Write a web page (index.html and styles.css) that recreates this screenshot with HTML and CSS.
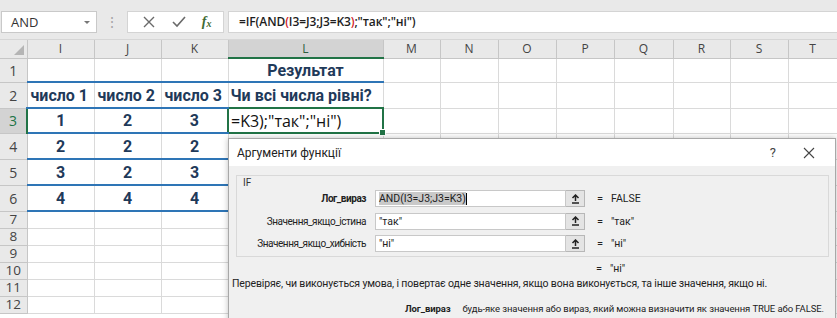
FILE: index.html
```html
<!DOCTYPE html>
<html lang="uk">
<head>
    <meta charset="UTF-8">
    <title>IF — Аргументи функції</title>
    <link rel="stylesheet" href="styles.css">
</head>
<body>
    <div class="toolbar">
        <div class="name-box">
            <span>AND</span>
            <span class="caret"></span>
        </div>
        <div class="grip">⋮</div>
        <div class="fx-buttons">
            <svg width="14" height="14" viewBox="0 0 14 14"><path d="M2 2 L12 12 M12 2 L2 12" stroke="#6a6a6a" stroke-width="1.4" fill="none"/></svg>
            <svg width="16" height="14" viewBox="0 0 16 14"><path d="M2 7 L6 11 L14 2" stroke="#6a6a6a" stroke-width="1.6" fill="none"/></svg>
            <span class="fx">f<sub>x</sub></span>
        </div>
        <div class="formula">=IF(AND<span class="paren">(</span>I3=J3;J3=K3<span class="paren">)</span>;"так";"ні")</div>
    </div>

    <table class="sheet">
        <colgroup>
            <col style="width:27px"><col style="width:67px"><col style="width:67px"><col style="width:67px">
            <col style="width:155px"><col style="width:57px"><col style="width:58px"><col style="width:58px">
            <col style="width:58px"><col style="width:59px"><col style="width:57px"><col style="width:58px"><col style="width:49px">
        </colgroup>
        <tr class="head">
            <th class="corner"><span class="tri"></span></th>
            <th>I</th><th>J</th><th>K</th><th class="sel">L</th><th>M</th><th>N</th>
            <th>O</th><th>P</th><th>Q</th><th>R</th><th>S</th><th>T</th>
        </tr>
        <tr class="tall r1">
            <th>1</th>
            <td class="blue-b"></td><td class="blue-b"></td><td class="blue-b"></td>
            <td class="blue-b title">Результат</td>
            <td></td><td></td><td></td><td></td><td></td><td></td><td></td><td></td>
        </tr>
        <tr class="tall r2">
            <th>2</th>
            <td class="blue-b val">число 1</td><td class="blue-b val">число 2</td><td class="blue-b val">число 3</td>
            <td class="title left">Чи всі числа рівні?</td>
            <td></td><td></td><td></td><td></td><td></td><td></td><td></td><td></td>
        </tr>
        <tr class="tall r3">
            <th class="sel-row">3</th>
            <td class="blue-b blue-l num">1</td><td class="blue-b num">2</td><td class="blue-b num">3</td>
            <td class="active">=K3);"так";"ні")<span class="handle"></span></td>
            <td></td><td></td><td></td><td></td><td></td><td></td><td></td><td></td>
        </tr>
        <tr class="tall r4">
            <th>4</th>
            <td class="blue-b num">2</td><td class="blue-b num">2</td><td class="blue-b num">2</td>
            <td></td><td></td><td></td><td></td><td></td><td></td><td></td><td></td><td></td>
        </tr>
        <tr class="tall r5">
            <th>5</th>
            <td class="blue-b num">3</td><td class="blue-b num">2</td><td class="blue-b num">3</td>
            <td></td><td></td><td></td><td></td><td></td><td></td><td></td><td></td><td></td>
        </tr>
        <tr class="tall r6">
            <th>6</th>
            <td class="blue-b num">4</td><td class="blue-b num">4</td><td class="blue-b num">4</td>
            <td></td><td></td><td></td><td></td><td></td><td></td><td></td><td></td><td></td>
        </tr>
        <tr class="short"><th>7</th><td></td><td></td><td></td><td></td><td></td><td></td><td></td><td></td><td></td><td></td><td></td><td></td></tr>
        <tr class="short"><th>8</th><td></td><td></td><td></td><td></td><td></td><td></td><td></td><td></td><td></td><td></td><td></td><td></td></tr>
        <tr class="short"><th>9</th><td></td><td></td><td></td><td></td><td></td><td></td><td></td><td></td><td></td><td></td><td></td><td></td></tr>
        <tr class="short"><th>10</th><td></td><td></td><td></td><td></td><td></td><td></td><td></td><td></td><td></td><td></td><td></td><td></td></tr>
        <tr class="short"><th>11</th><td></td><td></td><td></td><td></td><td></td><td></td><td></td><td></td><td></td><td></td><td></td><td></td></tr>
        <tr class="short"><th>12</th><td></td><td></td><td></td><td></td><td></td><td></td><td></td><td></td><td></td><td></td><td></td><td></td></tr>
    </table>

    <div class="dialog">
        <div class="dialog-title">
            <span>Аргументи функції</span>
            <div class="title-buttons">
                <span class="help">?</span>
                <svg width="12" height="12" viewBox="0 0 12 12"><path d="M1 1 L11 11 M11 1 L1 11" stroke="#444" stroke-width="1.1" fill="none"/></svg>
            </div>
        </div>
        <div class="dialog-body">
            <div class="group">
                <div class="group-name">IF</div>
                <div class="arg">
                    <label class="bold">Лог_вираз</label>
                    <div class="input"><span class="selected">AND(I3=J3;J3=K3)</span><span class="cursor"></span></div>
                    <div class="collapse"><svg width="9" height="10" viewBox="0 0 9 10"><path d="M4.5 1 L4.5 7 M1.5 4 L4.5 1 L7.5 4 M1 9 L8 9" stroke="#222" stroke-width="1.5" fill="none"/></svg></div>
                    <span class="eq">=</span>
                    <span class="result">FALSE</span>
                </div>
                <div class="arg">
                    <label>Значення_якщо_істина</label>
                    <div class="input">"так"</div>
                    <div class="collapse"><svg width="9" height="10" viewBox="0 0 9 10"><path d="M4.5 1 L4.5 7 M1.5 4 L4.5 1 L7.5 4 M1 9 L8 9" stroke="#222" stroke-width="1.5" fill="none"/></svg></div>
                    <span class="eq">=</span>
                    <span class="result">"так"</span>
                </div>
                <div class="arg">
                    <label>Значення_якщо_хибність</label>
                    <div class="input">"ні"</div>
                    <div class="collapse"><svg width="9" height="10" viewBox="0 0 9 10"><path d="M4.5 1 L4.5 7 M1.5 4 L4.5 1 L7.5 4 M1 9 L8 9" stroke="#222" stroke-width="1.5" fill="none"/></svg></div>
                    <span class="eq">=</span>
                    <span class="result">"ні"</span>
                </div>
            </div>
            <div class="total"><span class="eq">=</span><span class="result">"ні"</span></div>
            <p class="desc">Перевіряє, чи виконується умова, і повертає одне значення, якщо вона виконується, та інше значення, якщо ні.</p>
            <p class="arg-help"><b>Лог_вираз</b><span>будь-яке значення або вираз, який можна визначити як значення TRUE або FALSE.</span></p>
        </div>
    </div>
</body>
</html>
```

FILE: styles.css
```css
body {
    margin: 0;
    width: 837px;
    height: 318px;
    overflow: hidden;
    position: relative;
    background: #fff;
    font-family: "Open Sans", "Noto Sans", sans-serif;
    color: #222;
}

/* formula bar */
.toolbar {
    height: 40px;
    background: #e9e9e9;
    display: flex;
    align-items: flex-start;
    padding-top: 11px;
    box-sizing: border-box;
    border-bottom: 1px solid #d6d6d6;
}

.name-box {
    width: 96px;
    height: 22px;
    margin-left: 1px;
    background: #fff;
    border: 1px solid #c9c9c9;
    box-sizing: border-box;
    display: flex;
    align-items: center;
    justify-content: space-between;
    padding: 0 6px 0 9px;
    font-size: 13px;
    color: #333;
}

.caret {
    width: 0;
    height: 0;
    border-left: 3px solid transparent;
    border-right: 3px solid transparent;
    border-top: 3px solid #777;
}

.grip {
    width: 30px;
    text-align: center;
    color: #a5a5a5;
    font-size: 14px;
    line-height: 22px;
}

.fx-buttons {
    width: 97px;
    height: 22px;
    background: #fff;
    border: 1px solid #d4d4d4;
    box-sizing: border-box;
    display: flex;
    align-items: center;
    justify-content: space-around;
    padding: 0 4px 0 6px;
}

.fx {
    font-family: "Liberation Serif", serif;
    font-style: italic;
    font-weight: bold;
    font-size: 14px;
    color: #3f6b33;
}

.fx sub {
    font-size: 10px;
    vertical-align: -1px;
}

.formula {
    flex: 1;
    height: 22px;
    margin-left: 4px;
    background: #fff;
    border: 1px solid #d4d4d4;
    border-right: none;
    box-sizing: border-box;
    padding-left: 10px;
    font-size: 12px;
    font-weight: 600;
    letter-spacing: -0.1px;
    line-height: 20px;
    color: #1d1d1d;
}

.paren {
    color: #d2232a;
}

/* grid */
.sheet {
    width: 837px;
    table-layout: fixed;
    border-collapse: collapse;
}

.sheet td {
    padding: 0 2px;
    border-right: 1px solid #dadada;
    border-bottom: 1px solid #dadada;
    white-space: nowrap;
    overflow: hidden;
    font-family: Roboto, "Open Sans", sans-serif;
    font-weight: bold;
    color: #1f3a5a;
    font-size: 16px;
}

.sheet th {
    padding: 0;
    background: #e9e9e9;
    border-right: 1px solid #c6c6c6;
    border-bottom: 1px solid #c6c6c6;
    font-weight: normal;
    font-size: 13px;
    color: #444;
    text-align: center;
}

.head {
    height: 18px;
}

.head th {
    font-size: 12px;
    line-height: 16px;
}

.head th.sel {
    background: #d3d3d3;
    border-bottom: 2px solid #217346;
    color: #2f5d3e;
}

.corner {
    position: relative;
}

.tri {
    position: absolute;
    right: 3px;
    bottom: 3px;
    width: 0;
    height: 0;
    border-left: 10px solid transparent;
    border-bottom: 10px solid #b5b5b5;
}

.tall {
    height: 25px;
}

.tall th {
    font-size: 14px;
}

.r1 {
    height: 24px;
}

.r2,
.r4,
.r5,
.r6 {
    height: 26px;
}

.short {
    height: 17px;
}

.short th {
    font-size: 13.5px;
    line-height: 15px;
}

.sheet th.sel-row {
    background: #d3d3d3;
    border-right: 2px solid #217346;
    color: #217346;
}

.sheet td.blue-b {
    border-bottom: 2px solid #2e75b6;
}

.sheet td.blue-l {
    border-left: 2px solid #2e75b6;
}

.sheet td.num,
.sheet td.title {
    text-align: center;
}

.sheet td.val {
    padding: 0 0 0 3px;
}

.sheet td.left {
    text-align: left;
}

.r1 td.title {
    border-bottom: 2px solid #2e75b6;
}

.sheet td.active {
    position: relative;
    border: 2px solid #217346;
    font-family: "Open Sans", sans-serif;
    font-weight: normal;
    color: #111;
    font-size: 16px;
    overflow: visible;
}

.handle {
    position: absolute;
    right: -4px;
    bottom: -4px;
    width: 5px;
    height: 5px;
    background: #217346;
    border: 1px solid #fff;
}

/* dialog */
.dialog {
    position: absolute;
    left: 228px;
    top: 138px;
    width: 606px;
    height: 190px;
    background: #f0f0f0;
    border: 1px solid #a8a8a8;
    box-shadow: 0 0 6px rgba(0, 0, 0, 0.25);
    font-family: Roboto, "Open Sans", sans-serif;
    font-size: 11px;
    color: #222;
}

.dialog-title {
    height: 27px;
    background: #fff;
    display: flex;
    align-items: center;
    justify-content: space-between;
    padding: 0 20px 0 8px;
    font-size: 12px;
    color: #222;
}

.title-buttons {
    display: flex;
    align-items: center;
    gap: 27px;
}

.help {
    font-size: 13px;
    color: #444;
}

.dialog-body {
    padding: 9px 6px 0 7px;
}

.group {
    height: 82px;
    border: 1px solid #d9d9d9;
    box-sizing: border-box;
    padding: 1px 0 0 0;
}

.group-name {
    font-size: 10px;
    color: #333;
    padding-left: 6px;
    height: 13px;
    line-height: 12px;
}

.arg {
    display: flex;
    align-items: center;
    height: 17px;
    margin-bottom: 5.5px;
}

.arg label {
    width: 129px;
    text-align: right;
    margin-right: 9px;
    font-size: 10px;
    letter-spacing: -0.45px;
}

.bold {
    font-weight: bold;
}

.input {
    width: 191px;
    height: 17px;
    background: #fff;
    border: 1px solid #c8c8c8;
    box-sizing: border-box;
    padding-left: 3px;
    display: flex;
    align-items: center;
    font-size: 10.5px;
}

.selected {
    background: #c9c9c9;
}

.cursor {
    width: 1px;
    height: 12px;
    background: #000;
}

.collapse {
    width: 19px;
    height: 17px;
    background: #e4e4e4;
    border: 1px solid #b7b7b7;
    border-left: none;
    box-sizing: border-box;
    display: flex;
    align-items: center;
    justify-content: center;
}

.eq {
    margin-left: 12px;
    width: 14px;
}

.result {
    font-size: 10.5px;
}

.total {
    display: flex;
    padding-left: 348px;
    margin-top: 5px;
    height: 14px;
}

.desc {
    margin: 1px 0 0 -4px;
    font-size: 10.5px;
    letter-spacing: -0.15px;
    white-space: nowrap;
}

.arg-help {
    margin: 13px 0 0 169px;
    font-size: 9.5px;
    letter-spacing: -0.1px;
    white-space: nowrap;
}

.arg-help b {
    margin-right: 12px;
}
```
